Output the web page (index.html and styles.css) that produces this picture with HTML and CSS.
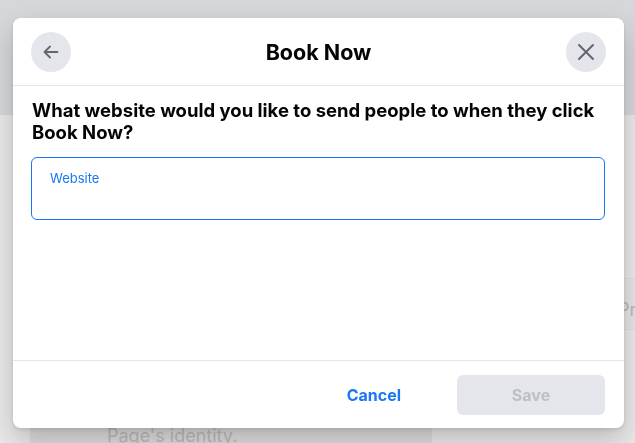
FILE: index.html
```html
<!DOCTYPE html>
<html lang="en">
<head>
<meta charset="utf-8">
<title>Book Now</title>
<link rel="stylesheet" href="styles.css">
</head>
<body>
<div class="page">
  <div class="topbar"></div>
  <div class="content">
    <div class="main-col">
      <div class="bg-card"></div>
      <div class="bg-card bg-card-low"><span class="bg-text">Page's identity.</span></div>
    </div>
    <div class="side-col">
      <div class="side-row"><span class="bg-text">Preview</span></div>
    </div>
  </div>
</div>

<div class="modal" role="dialog" aria-labelledby="modal-title">
  <header class="modal-header">
    <button class="circle-btn" aria-label="Back">
      <svg width="20" height="20" viewBox="0 0 20 20" fill="none" stroke="#606770" stroke-width="1.8" stroke-linecap="round" stroke-linejoin="round">
        <path d="M16.5 10H3.5M9 4.5L3.5 10L9 15.5"/>
      </svg>
    </button>
    <h1 id="modal-title" class="modal-title">Book Now</h1>
    <button class="circle-btn" aria-label="Close">
      <svg width="20" height="20" viewBox="0 0 20 20" fill="none" stroke="#606770" stroke-width="2" stroke-linecap="round">
        <path d="M3 3L17 17M17 3L3 17"/>
      </svg>
    </button>
  </header>
  <div class="modal-body">
    <p class="question">What website would you like to send people to when they click Book Now?</p>
    <label class="field">
      <span class="field-label">Website</span>
      <input class="field-input" type="text" aria-label="Website">
    </label>
  </div>
  <footer class="modal-footer">
    <button class="btn-cancel">Cancel</button>
    <button class="btn-save" disabled>Save</button>
  </footer>
</div>
</body>
</html>
```

FILE: styles.css
```css
* { box-sizing: border-box; }

html, body {
  margin: 0;
  padding: 0;
  width: 635px;
  height: 443px;
  overflow: hidden;
}

body {
  font-family: Inter, "Liberation Sans", Arial, sans-serif;
  background: #e9e9ea;
}

.page {
  display: flex;
  flex-direction: column;
  height: 443px;
}

.topbar {
  height: 115px;
  background: #d6d7da;
  flex-shrink: 0;
}

.content {
  flex: 1;
  display: flex;
  padding-left: 30px;
}

.main-col {
  width: 402px;
  flex-shrink: 0;
  display: flex;
  flex-direction: column;
}

.bg-card {
  height: 228px;
  background: #ebebeb;
}

.bg-card-low {
  height: 100px;
  background: #dcdcdc;
  padding: 82px 0 0 77px;
}

.bg-text {
  font-size: 18px;
  line-height: 22px;
  color: #bababa;
  white-space: nowrap;
}

.side-col {
  flex: 1;
  min-width: 0;
  padding-top: 163px;
}

.side-row {
  height: 52px;
  background: #e5e5e5;
  border-top: 1px solid #dedede;
  border-bottom: 1px solid #dedede;
  padding: 20px 0 0 186px;
  white-space: nowrap;
  overflow: hidden;
}

.modal {
  position: fixed;
  left: 13px;
  top: 18px;
  width: 611px;
  height: 410px;
  background: #fff;
  border-radius: 8px;
  box-shadow: 0 12px 28px 0 rgba(0, 0, 0, 0.2), 0 2px 4px 0 rgba(0, 0, 0, 0.1);
  display: flex;
  flex-direction: column;
  overflow: hidden;
}

.modal-header {
  height: 68px;
  flex-shrink: 0;
  display: flex;
  align-items: center;
  justify-content: space-between;
  padding: 0 18px;
  border-bottom: 1px solid #e5e5e5;
}

.circle-btn {
  width: 40px;
  height: 40px;
  border-radius: 50%;
  border: none;
  background: #e4e6eb;
  display: flex;
  align-items: center;
  justify-content: center;
  padding: 0;
}

.modal-title {
  margin: 0;
  font-size: 21.5px;
  font-weight: 700;
  color: #050505;
}

.modal-body {
  flex: 1;
  padding: 13px 19px 0 18px;
}

.question {
  margin: 0 0 14px 1px;
  font-size: 18.5px;
  line-height: 22px;
  font-weight: 700;
  color: #050505;
}

.field {
  display: flex;
  flex-direction: column;
  height: 63px;
  border: 1px solid #1877f2;
  border-radius: 6px;
  padding: 11px 18px 0;
}

.field-label {
  font-size: 13px;
  line-height: 18px;
  color: #1877f2;
}

.field-input {
  border: none;
  outline: none;
  font-family: inherit;
  font-size: 16px;
  padding: 0;
  background: transparent;
}

.modal-footer {
  height: 68px;
  flex-shrink: 0;
  border-top: 1px solid #e5e5e5;
  display: flex;
  align-items: center;
  justify-content: flex-end;
  padding: 0 19px 0 0;
}

.btn-cancel {
  border: none;
  background: transparent;
  font-family: inherit;
  font-size: 16px;
  font-weight: 700;
  color: #1877f2;
  padding: 0 28px;
  height: 40px;
  margin-right: 28px;
}

.btn-save {
  width: 148px;
  height: 40px;
  border: none;
  border-radius: 6px;
  background: #e4e6eb;
  font-family: inherit;
  font-size: 16px;
  font-weight: 700;
  color: #bcc0c4;
}
```
